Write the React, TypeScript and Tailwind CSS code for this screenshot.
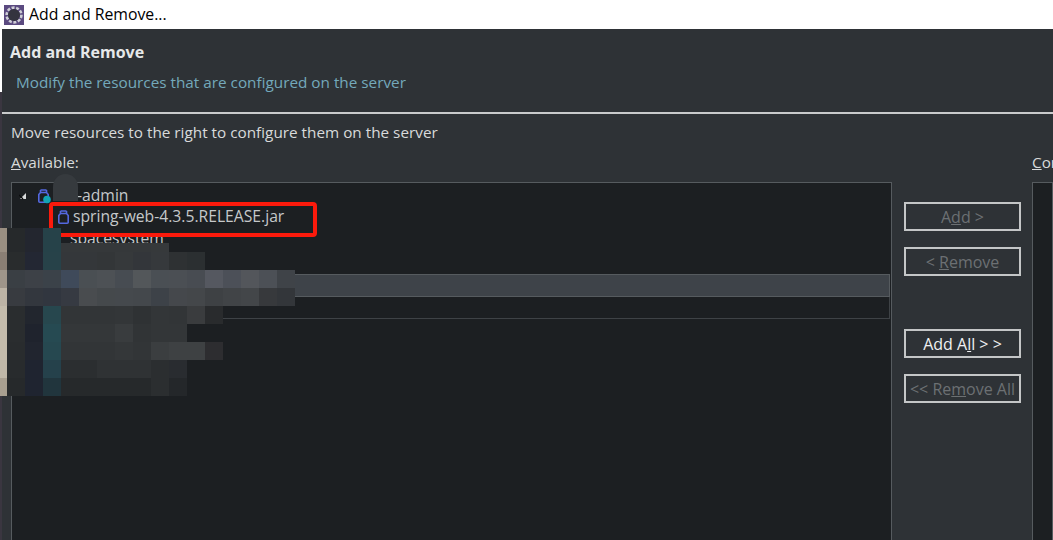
const pixelRows = [
  { top: 228, height: 15, cells: ["#9a8f82", "#26292b", "#23262f", "#264249"] },
  { top: 243, height: 9, cells: ["#9a8f82", "#26292b", "#23262f", "#264249", "#35383a", "#35383a", "#35383a", "#35383a", "#35383a", "#36393b"] },
  { top: 252, height: 18, cells: ["#8a7f74", "#292c2d", "#232733", "#274249", "#34373a", "#34373a", "#333638", "#36393b", "#33363a", "#36393c", "#2e3133", "#2b2f31"] },
  { top: 270, height: 18, cells: ["#9e958a", "#3a3f44", "#3d4147", "#3b4249", "#3f4a5a", "#4a4f53", "#4d5155", "#474c52", "#53575a", "#4a4f54", "#4b4f54", "#484c52", "#555860", "#4c5058", "#53565b", "#4c5056", "#3f4348"] },
  { top: 288, height: 18, cells: ["#bdb4a6", "#383b40", "#33373e", "#31363f", "#363a42", "#494c4f", "#45494c", "#45494d", "#44484c", "#3d4248", "#45484c", "#44474a", "#3e4144", "#414447", "#434649", "#37393c", "#33363a"] },
  { top: 306, height: 18, cells: ["#c4bcac", "#2a2d2f", "#22262e", "#27474e", "#323537", "#323537", "#323537", "#333638", "#2f3234", "#333638", "#323537", "#3a3c3e", "#292b2d"] },
  { top: 324, height: 18, cells: ["#c4bcac", "#2a2d2f", "#1f232d", "#264a52", "#343739", "#343739", "#343739", "#393c3e", "#313436", "#333638", "#333638"] },
  { top: 342, height: 18, cells: ["#c4bcac", "#292c2e", "#21252f", "#264850", "#323537", "#323537", "#323537", "#343739", "#323537", "#3b3e40", "#3e4143", "#3e4143", "#2d2d30"] },
  { top: 360, height: 18, cells: ["#bfb7a8", "#282b2d", "#1f2430", "#25414b", "#2b2e30", "#2b2e30", "#2f3234", "#2f3234", "#2f3234", "#2b2e30", "#292c30"] },
  { top: 378, height: 18, cells: ["#a89f90", "#26292b", "#1f2430", "#21353d", "#26292b", "#26292b", "#26292b", "#26292b", "#26292b", "#2b2e30", "#24272a"] },
]

function AppIcon() {
  return (
    <svg width="20" height="20" viewBox="0 0 20 20" className="shrink-0">
      <rect width="20" height="20" fill="#5b4a80" />
      <circle cx="10" cy="10" r="7.4" fill="none" stroke="#cfcfd6" strokeWidth="2.6" strokeDasharray="3 1.6" />
      <circle cx="10" cy="10" r="6" fill="#34343f" />
    </svg>
  )
}

function JarIcon({ badge }: { badge?: boolean }) {
  return (
    <svg width="14" height="16" viewBox="0 0 14 16" className="shrink-0">
      <path d="M3.5 2h6M3.5 2v2.5L1.8 6.5v6.7a1 1 0 0 0 1 1h7.4a1 1 0 0 0 1-1V6.5L9.5 4.5V2M3.5 4.5h6" fill="none" stroke="#5468e0" strokeWidth="1.6" />
      {badge && <circle cx="10" cy="11.5" r="3.8" fill="#12a5b5" />}
    </svg>
  )
}

function ActionButton({ enabled, children }: { enabled?: boolean; children: React.ReactNode }) {
  return (
    <div className={`h-[29px] w-[117px] border-2 border-[#c4c6c7] flex items-center justify-center pt-px text-[16px] leading-none whitespace-nowrap ${enabled ? "text-[#eef0f1]" : "text-[#6c7073]"}`}>
      <span>{children}</span>
    </div>
  )
}

export default function App() {
  return (
    <div className="relative w-[1053px] h-[540px] overflow-hidden bg-[#2e3236] font-['Open_Sans','Noto_Sans',sans-serif]">
      {/* title bar */}
      <div className="h-[29px] bg-white flex items-center pl-[4px] gap-[5px] text-[15.8px] text-black">
        <AppIcon />
        <span>Add and Remove...</span>
      </div>

      {/* header */}
      <div className="h-[83px] pl-[10px] pt-[13px]">
        <div className="text-[16px] leading-[20px] font-bold text-[#e6e8e9]">Add and Remove</div>
        <div className="mt-[10px] pl-[6px] text-[15.3px] leading-[20px] text-[#74a9bb]">Modify the resources that are configured on the server</div>
      </div>
      <div className="h-[2px] bg-[#c9cbcc]" />

      {/* body */}
      <div className="pl-[11px] pt-[8px]">
        <div className="text-[15.3px] leading-[20px] text-[#d8dadb]">Move resources to the right to configure them on the server</div>
        <div className="flex mt-[10px]">
          <div className="w-[881px] shrink-0">
            <div className="text-[15.3px] leading-[20px] text-[#d8dadb]"><u>A</u>vailable:</div>
            <div className="mt-[10px] h-[400px] border border-[#565b5f] bg-[#1c1f22] pt-[2px] text-[15.7px] text-[#c5c8ca]">
              <div className="h-[21px] flex items-center pl-[7px]">
                <svg width="8" height="8" viewBox="0 0 8 8" className="mr-[10px] shrink-0">
                  <path d="M7 1v6H1z" fill="#d8dadb" />
                  <path d="M0 3l4 4" stroke="#0b0c0d" strokeWidth="1.2" />
                </svg>
                <JarIcon badge />
                <span className="ml-[26px]">-admin</span>
              </div>
              <div className="h-[22px] flex items-center pl-[45px]">
                <JarIcon />
                <span className="ml-[2px]">spring-web-4.3.5.RELEASE.jar</span>
              </div>
              <div className="h-[21px] flex items-center pl-[26px]">
                <JarIcon />
                <span className="ml-[18px]">spacesystem</span>
              </div>
              <div className="h-[25px]" />
              <div className="h-[23px] mr-px bg-[#3e4349] border border-[#565b5f]" />
              <div className="h-[22px] mr-px border-x border-b border-[#3e4246]" />
            </div>
          </div>

          <div className="w-[140px] shrink-0 pl-[12px] pt-[50px] flex flex-col">
            <ActionButton>A<u>d</u>d &gt;</ActionButton>
            <div className="mt-[16px]"><ActionButton>&lt; <u>R</u>emove</ActionButton></div>
            <div className="mt-[53px]"><ActionButton enabled>Add A<u>l</u>l &gt; &gt;</ActionButton></div>
            <div className="mt-[16px]"><ActionButton>&lt;&lt; Re<u>m</u>ove All</ActionButton></div>
          </div>

          <div className="flex-1 min-w-0 overflow-hidden">
            <div className="text-[15.3px] leading-[20px] text-[#d8dadb] whitespace-nowrap"><u>C</u>onfigured:</div>
            <div className="mt-[10px] h-[400px] border border-[#565b5f] bg-[#1c1f22]" />
          </div>
        </div>
      </div>

      {/* left window edges */}
      <div className="absolute left-0 top-0 w-[2px] h-[92px] bg-white" />
      <div className="absolute left-0 top-[92px] w-[2px] h-[448px] bg-[#3a3640]" />

      {/* highlight box drawn over the screenshot */}
      <div className="absolute left-[49px] top-[202px] w-[268px] h-[35px] border-[4px] border-[#fb1a0c] rounded-[4px]" />

      {/* mosaic covering hidden names */}
      <div className="absolute left-[53px] top-[174px] w-[25px] h-[27px] rounded-t-full bg-[#363a3e]" />
      {pixelRows.map((row) => (
        <div key={row.top} className="absolute left-0 flex" style={{ top: row.top, height: row.height }}>
          {row.cells.map((color, i) => (
            <div key={i} className={i === 0 ? "w-[7px]" : "w-[18px]"} style={{ backgroundColor: color }} />
          ))}
        </div>
      ))}
      <div className="absolute left-[223px] top-[306px] w-[83px] h-[12px] bg-[#1c1f22]" />
    </div>
  )
}
